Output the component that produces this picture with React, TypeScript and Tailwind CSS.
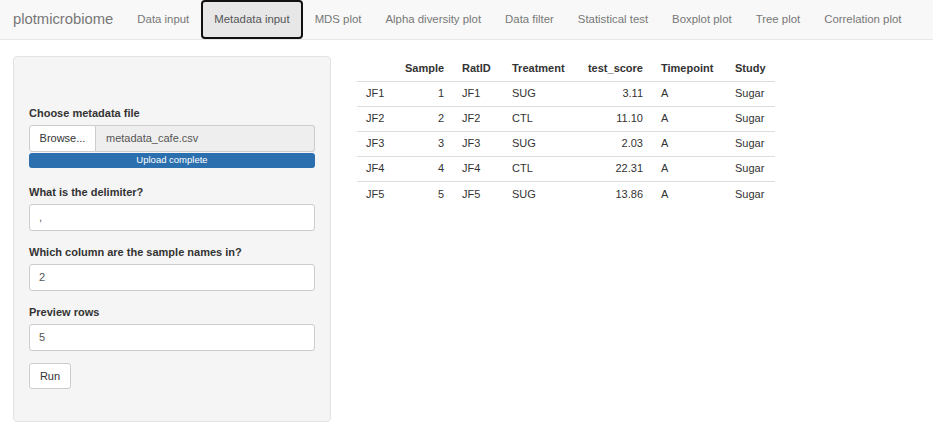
const tabs = [
  "Data input",
  "Metadata input",
  "MDS plot",
  "Alpha diversity plot",
  "Data filter",
  "Statistical test",
  "Boxplot plot",
  "Tree plot",
  "Correlation plot",
];

const rows = [
  ["JF1", "1", "JF1", "SUG", "3.11", "A", "Sugar"],
  ["JF2", "2", "JF2", "CTL", "11.10", "A", "Sugar"],
  ["JF3", "3", "JF3", "SUG", "2.03", "A", "Sugar"],
  ["JF4", "4", "JF4", "CTL", "22.31", "A", "Sugar"],
  ["JF5", "5", "JF5", "SUG", "13.86", "A", "Sugar"],
];

function Field({ label, value, className }: { label: string; value: string; className?: string }) {
  return (
    <div className={className}>
      <label className="mb-[5px] block text-[11px] font-bold leading-[14px] text-[#333]">{label}</label>
      <div className="flex h-[27px] items-center rounded-[3px] border border-[#ccc] bg-white px-[9px] text-[11px] text-[#555]">
        {value}
      </div>
    </div>
  );
}

export default function App() {
  return (
    <div className="min-h-[440px] bg-white font-['Liberation_Sans',Arial,sans-serif] text-[#333]">
      <nav className="flex h-[40px] items-stretch border-b border-[#e7e7e7] bg-[#f8f8f8]">
        <div className="flex items-center pl-[13px] pr-[12px] text-[14.8px] text-[#777]">plotmicrobiome</div>
        <ul className="flex items-stretch">
          {tabs.map((t) =>
            t === "Metadata input" ? (
              <li
                key={t}
                className="flex h-[39px] items-center rounded-[4px] border-2 border-[#111] bg-[#e7e7e7] px-[11px] text-[11.4px] text-[#555]"
              >
                {t}
              </li>
            ) : (
              <li key={t} className="flex items-center px-[12px] text-[11.4px] text-[#777]">
                {t}
              </li>
            ),
          )}
        </ul>
      </nav>

      <div className="flex items-start gap-[26px] pl-[13px] pt-[16px]">
        <aside className="w-[318px] rounded-[4px] border border-[#e3e3e3] bg-[#f5f5f5] px-[15px] pb-[32px] pt-[49px]">
          <label className="mb-[5px] block text-[11px] font-bold leading-[14px]">Choose metadata file</label>
          <div className="flex h-[27px] text-[11px]">
            <div className="flex w-[67px] items-center justify-center rounded-l-[3px] border border-[#ccc] bg-white text-[#333]">
              Browse...
            </div>
            <div className="flex flex-1 items-center rounded-r-[3px] border border-l-0 border-[#ccc] bg-[#eee] px-[10px] text-[#555]">
              metadata_cafe.csv
            </div>
          </div>
          <div className="mt-[1px] flex h-[15px] items-center justify-center rounded-[3px] bg-[#2b6fae] text-[9.5px] text-white">
            Upload complete
          </div>

          <Field className="mt-[17px]" label="What is the delimiter?" value="," />
          <Field className="mt-[14px]" label="Which column are the sample names in?" value="2" />
          <Field className="mt-[14px]" label="Preview rows" value="5" />

          <button className="mt-[12px] flex h-[26px] w-[42px] items-center justify-center rounded-[3px] border border-[#ccc] bg-white text-[11px] text-[#333]">
            Run
          </button>
        </aside>

        <table className="w-[418px] table-fixed border-collapse text-[11px]">
          <colgroup>
            <col className="w-[39px]" />
            <col className="w-[57px]" />
            <col className="w-[50px]" />
            <col className="w-[74px]" />
            <col className="w-[75px]" />
            <col className="w-[74px]" />
            <col className="w-[49px]" />
          </colgroup>
          <thead>
            <tr className="h-[25px] border-b border-[#ddd] font-bold">
              <th className="px-[9px]"></th>
              <th className="px-[9px] text-right">Sample</th>
              <th className="px-[9px] text-left">RatID</th>
              <th className="px-[9px] text-left">Treatment</th>
              <th className="px-[9px] text-right">test_score</th>
              <th className="px-[9px] text-left">Timepoint</th>
              <th className="px-[9px] text-left">Study</th>
            </tr>
          </thead>
          <tbody>
            {rows.map((r, i) => (
              <tr key={r[0]} className={`h-[25px] ${i < rows.length - 1 ? "border-b border-[#ddd]" : ""}`}>
                <td className="px-[9px]">{r[0]}</td>
                <td className="px-[9px] text-right">{r[1]}</td>
                <td className="px-[9px]">{r[2]}</td>
                <td className="px-[9px]">{r[3]}</td>
                <td className="px-[9px] text-right">{r[4]}</td>
                <td className="px-[9px]">{r[5]}</td>
                <td className="px-[9px]">{r[6]}</td>
              </tr>
            ))}
          </tbody>
        </table>
      </div>
    </div>
  );
}
